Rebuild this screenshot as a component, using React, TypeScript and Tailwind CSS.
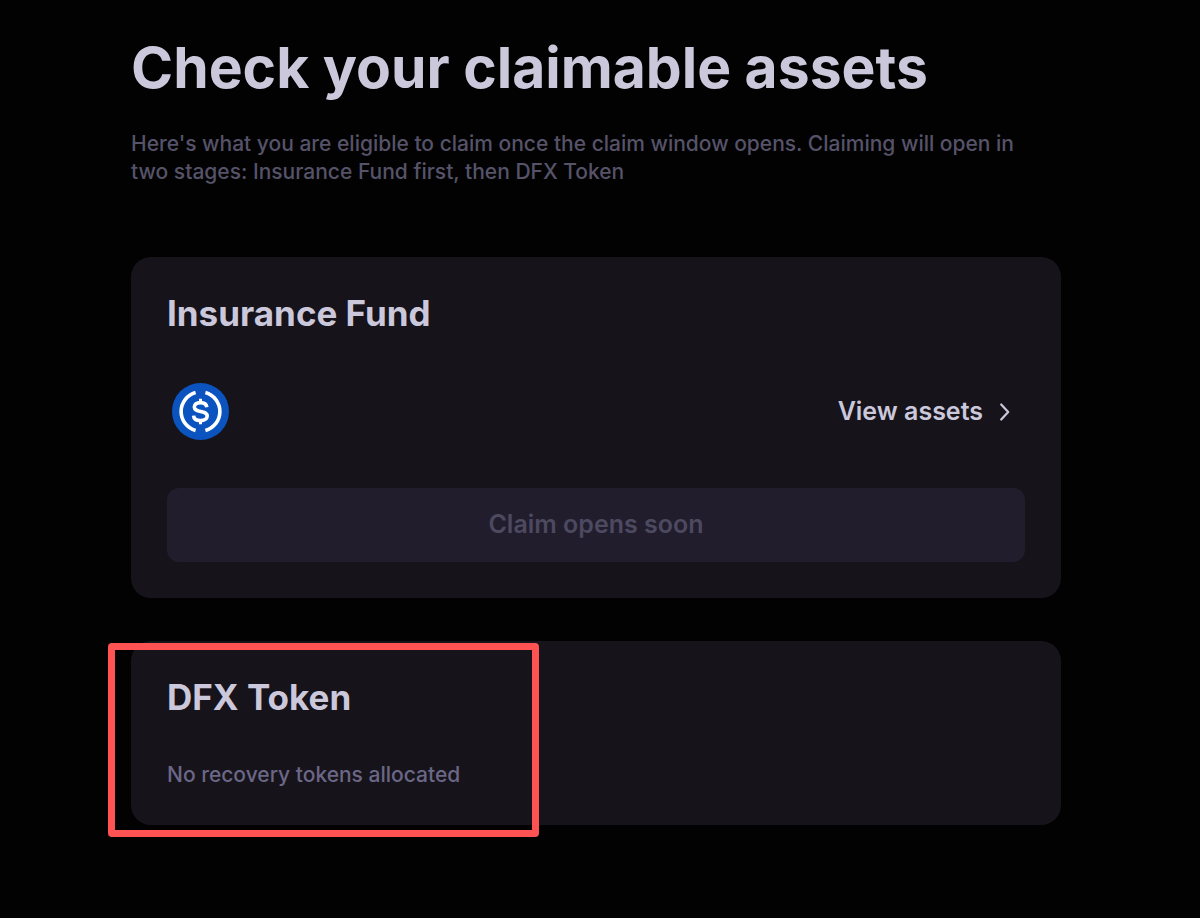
const UsdcIcon = () => (
  <svg viewBox="0 0 57 57" className="size-[57px]" role="img" aria-label="USDC">
    <circle cx="28.500" cy="28.500" r="28.500" fill="#0b53bf" />
    <g fill="none" stroke="#fff" strokeWidth="3.600">
      <path d="M23.600 9.500A19.700 19.700 0 0 0 23.600 47.500" />
      <path d="M33.400 9.500A19.700 19.700 0 0 1 33.400 47.500" />
      <path d="M34.800 24.300C34.500 21.300 32 19.600 28.400 19.600c-3.700 0-6.100 1.800-6.100 4.400 0 6.200 12.900 2.700 12.900 9.100 0 2.700-2.700 4.500-6.700 4.500-4 0-6.700-1.800-6.900-5" />
      <path d="M28.500 15.700v4.200M28.500 37v4.200" strokeWidth="3" />
    </g>
  </svg>
);

const ChevronIcon = () => (
  <svg
    viewBox="0 0 12 20"
    className="h-5 w-3"
    fill="none"
    stroke="currentColor"
    strokeWidth="2.200"
    strokeLinecap="round"
    strokeLinejoin="round"
    aria-hidden="true"
  >
    <path d="M2.200 2.500 9.200 10 2.200 17.500" />
  </svg>
);

export default function App() {
  return (
    <main className="min-h-screen bg-[#020203] pt-9 pr-[139px] pb-12 pl-[131px] font-['Inter',sans-serif] text-[#cac8da]">
      <h1 className="text-[57px] leading-16 font-bold">
        Check your claimable assets
      </h1>
      <p className="mt-[30px] max-w-[900px] text-[21px] leading-7 font-medium text-[#565369]">
        Here's what you are eligible to claim once the claim window opens.
        Claiming will open in two stages: Insurance Fund first, then DFX Token
      </p>

      <section className="mt-[71px] rounded-[20px] bg-[#16131b] p-9">
        <h2 className="text-[35px] leading-10 font-bold">Insurance Fund</h2>
        <div className="mt-[50px] flex items-center justify-between pr-[14px] pl-[5px]">
          <UsdcIcon />
          <button
            type="button"
            className="flex items-center gap-4 text-[25px] font-semibold"
          >
            View assets
            <ChevronIcon />
          </button>
        </div>
        <button
          type="button"
          disabled
          className="mt-12 h-[74px] w-full rounded-xl bg-[#211d2c] text-[25px] font-semibold text-[#4c4960]"
        >
          Claim opens soon
        </button>
      </section>

      <section className="relative mt-[43px] rounded-[20px] bg-[#16131b] p-9">
        <h2 className="text-[35px] leading-10 font-bold">DFX Token</h2>
        <p className="mt-11 text-[21px] leading-7 font-medium text-[#6b6786]">
          No recovery tokens allocated
        </p>
        <div className="pointer-events-none absolute top-[2px] -left-[23px] h-[194px] w-[431px] rounded-sm border-7 border-[#ff5252]" />
      </section>
    </main>
  );
}
